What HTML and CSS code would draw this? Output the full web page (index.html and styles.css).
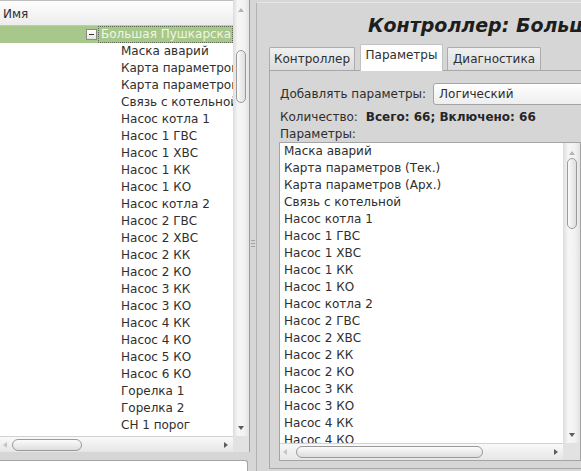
FILE: index.html
```html
<!DOCTYPE html>
<html>
<head>
<meta charset="utf-8">
<link rel="stylesheet" href="styles.css">
</head>
<body>
<div class="app">
  <div class="left">
    <div class="tree">
      <div class="tree-view">
        <div class="tree-header">Имя</div>
        <div class="tree-row selected"><span class="expander"></span><span class="focus">Большая Пушкарская</span></div>
        <div class="tree-row child">Маска аварий</div>
        <div class="tree-row child">Карта параметров (Тек.)</div>
        <div class="tree-row child">Карта параметров (Арх.)</div>
        <div class="tree-row child">Связь с котельной</div>
        <div class="tree-row child">Насос котла 1</div>
        <div class="tree-row child">Насос 1 ГВС</div>
        <div class="tree-row child">Насос 1 ХВС</div>
        <div class="tree-row child">Насос 1 КК</div>
        <div class="tree-row child">Насос 1 КО</div>
        <div class="tree-row child">Насос котла 2</div>
        <div class="tree-row child">Насос 2 ГВС</div>
        <div class="tree-row child">Насос 2 ХВС</div>
        <div class="tree-row child">Насос 2 КК</div>
        <div class="tree-row child">Насос 2 КО</div>
        <div class="tree-row child">Насос 3 КК</div>
        <div class="tree-row child">Насос 3 КО</div>
        <div class="tree-row child">Насос 4 КК</div>
        <div class="tree-row child">Насос 4 КО</div>
        <div class="tree-row child">Насос 5 КО</div>
        <div class="tree-row child">Насос 6 КО</div>
        <div class="tree-row child">Горелка 1</div>
        <div class="tree-row child">Горелка 2</div>
        <div class="tree-row child">СН 1 порог</div>
        <div class="tree-row child">СН 2 порог</div>
      </div>
      <div class="vscroll">
        <span class="arr-up"></span>
        <span class="vthumb tree-vthumb"></span>
        <span class="arr-down"></span>
      </div>
      <div class="hscroll">
        <span class="arr-left"></span>
        <span class="hthumb tree-hthumb"></span>
        <span class="arr-right"></span>
      </div>
      <div class="corner"></div>
    </div>
    <div class="bottom-box"></div>
  </div>

  <div class="splitter"><span class="grip"></span></div>

  <div class="right">
    <div class="title">Контроллер: Большая Пушкарская</div>
    <div class="tabs">
      <div class="tab tab-1">Контроллер</div>
      <div class="tab tab-2 active">Параметры</div>
      <div class="tab tab-3">Диагностика</div>
    </div>
    <div class="panel">
      <div class="add-row">
        <span class="label">Добавлять параметры:</span>
        <div class="combo">Логический</div>
      </div>
      <div class="count-row">Количество:<b class="count">Всего: 66; Включено: 66</b></div>
      <div class="params-label">Параметры:</div>
      <div class="list">
        <div class="list-view">
          <div class="item">Маска аварий</div>
          <div class="item">Карта параметров (Тек.)</div>
          <div class="item">Карта параметров (Арх.)</div>
          <div class="item">Связь с котельной</div>
          <div class="item">Насос котла 1</div>
          <div class="item">Насос 1 ГВС</div>
          <div class="item">Насос 1 ХВС</div>
          <div class="item">Насос 1 КК</div>
          <div class="item">Насос 1 КО</div>
          <div class="item">Насос котла 2</div>
          <div class="item">Насос 2 ГВС</div>
          <div class="item">Насос 2 ХВС</div>
          <div class="item">Насос 2 КК</div>
          <div class="item">Насос 2 КО</div>
          <div class="item">Насос 3 КК</div>
          <div class="item">Насос 3 КО</div>
          <div class="item">Насос 4 КК</div>
          <div class="item">Насос 4 КО</div>
          <div class="item">Насос 5 КО</div>
          <div class="item">Насос 6 КО</div>
        </div>
        <div class="vscroll">
          <span class="arr-up"></span>
          <span class="vthumb list-vthumb"></span>
          <span class="arr-down"></span>
        </div>
        <div class="hscroll">
          <span class="arr-left"></span>
          <span class="hthumb list-hthumb"></span>
          <span class="arr-right"></span>
        </div>
        <div class="corner"></div>
      </div>
    </div>
  </div>
</div>
</body>
</html>
```

FILE: styles.css
```css
html, body {
  margin: 0;
  padding: 0;
}
body {
  width: 581px;
  height: 471px;
  overflow: hidden;
  background: #d6d6d6;
  font-family: "DejaVu Sans", sans-serif;
  font-size: 12px;
  color: #2e2e2e;
}
.app {
  display: flex;
  height: 471px;
}

/* ---------- left pane ---------- */
.left {
  width: 250px;
  flex: none;
  display: flex;
  flex-direction: column;
}
.tree {
  display: grid;
  grid-template-columns: 233px 16px;
  grid-template-rows: 436px 16px;
  border-right: 1px solid #9c9c9c;
  background: #fff;
}
.tree-view {
  overflow: hidden;
  min-height: 0;
  background: #fff;
}
.tree-header {
  height: 24px;
  box-sizing: content-box;
  border-top: 1px solid #bdbdbd;
  border-bottom: 1px solid #c4c4c4;
  background: linear-gradient(#fefefe, #ececec);
  padding-left: 3px;
  line-height: 26px;
}
.tree-row {
  height: 17px;
  line-height: 17px;
  white-space: nowrap;
  overflow: hidden;
}
.child {
  padding-left: 121px;
}
.selected {
  display: flex;
  align-items: center;
  padding-left: 86px;
  background: #a7c78b;
  color: #eef6e2;
}
.expander {
  flex: none;
  width: 9px;
  height: 9px;
  border: 1px solid #8a8a8a;
  background: linear-gradient(#ffffff, #e4e4e4);
  margin-right: 1px;
  display: flex;
  align-items: center;
  justify-content: center;
}
.expander::before {
  content: "";
  width: 5px;
  height: 1px;
  background: #333;
}
.focus {
  flex: 1;
  height: 17px;
  box-sizing: border-box;
  border: 1px dotted #5a6a50;
  padding-left: 2px;
  line-height: 15px;
  overflow: hidden;
}

/* ---------- scrollbars ---------- */
.vscroll {
  display: flex;
  flex-direction: column;
  align-items: center;
  min-height: 0;
  background: linear-gradient(to right, #dcdcdc, #f6f6f6 30%, #f2f2f2 70%, #e2e2e2);
}
.hscroll {
  display: flex;
  align-items: center;
  background: linear-gradient(#f9f9f9, #e6e6e6);
  border-top: 1px solid #d2d2d2;
}
.corner {
  background: #e2e2e2;
}
.arr-up {
  margin-top: 8px;
  width: 0;
  height: 0;
  border-left: 3px solid transparent;
  border-right: 3px solid transparent;
  border-bottom: 4px solid #b4b4b4;
}
.arr-down {
  margin-top: auto;
  margin-bottom: 6px;
  width: 0;
  height: 0;
  border-left: 3px solid transparent;
  border-right: 3px solid transparent;
  border-top: 4px solid #5c5c5c;
}
.arr-left {
  margin-left: 3px;
  width: 0;
  height: 0;
  border-top: 3px solid transparent;
  border-bottom: 3px solid transparent;
  border-right: 4px solid #c4c4c4;
}
.arr-right {
  margin-left: auto;
  margin-right: 5px;
  width: 0;
  height: 0;
  border-top: 3px solid transparent;
  border-bottom: 3px solid transparent;
  border-left: 4px solid #5c5c5c;
}
.vthumb {
  width: 10px;
  box-sizing: border-box;
  border: 1px solid #9a9a9a;
  border-radius: 6px;
  background: linear-gradient(to right, #fbfbfb, #dedede);
}
.hthumb {
  height: 12px;
  box-sizing: border-box;
  border: 1px solid #9a9a9a;
  border-radius: 6px;
  background: linear-gradient(#fbfbfb, #dedede);
}
.tree-vthumb {
  margin-top: 38px;
  height: 53px;
}
.tree-hthumb {
  margin-left: 5px;
  width: 70px;
}
.list-vthumb {
  margin-top: 3px;
  height: 71px;
}
.list-hthumb {
  margin-left: 9px;
  width: 187px;
}

.bottom-box {
  margin-top: 8px;
  flex: 1;
  width: 249px;
  margin-left: -1px;
  box-sizing: border-box;
  background: #fff;
  border: 1px solid #a4a4a4;
  border-bottom: none;
  border-radius: 0 3px 0 0;
}

/* ---------- splitter ---------- */
.splitter {
  width: 6px;
  flex: none;
  display: flex;
  justify-content: center;
  padding-top: 240px;
  box-sizing: border-box;
}
.grip {
  width: 4px;
  height: 1px;
  background: #a2a2a2;
  box-shadow: 0 3px 0 #a2a2a2, 0 6px 0 #a2a2a2;
}

/* ---------- right pane ---------- */
.right {
  flex: 1;
  min-width: 0;
  min-height: 0;
  margin-top: 2px;
  border-top: 1px solid #e6e6e6;
  border-left: 1px solid #b2b2b2;
  padding: 0 0 2px 12px;
  overflow: hidden;
  display: flex;
  flex-direction: column;
}
.title {
  margin-top: 11px;
  padding-left: 99px;
  font-size: 19px;
  font-weight: bold;
  font-style: italic;
  line-height: 22px;
  color: #1e1e1e;
  white-space: nowrap;
}
.tabs {
  display: flex;
  align-items: flex-end;
  margin-top: 8px;
  height: 27px;
  flex: none;
  position: relative;
  z-index: 1;
  margin-bottom: -1px;
}
.tab {
  height: 23px;
  margin-bottom: 1px;
  box-sizing: border-box;
  border: 1px solid #acacac;
  border-bottom: none;
  border-radius: 2px 2px 0 0;
  background: linear-gradient(#f0f0f0, #dcdcdc);
  text-align: center;
  line-height: 22px;
  white-space: nowrap;
}
.tab-1 { width: 86px; }
.tab-2 { width: 83px; margin-left: 5px; }
.tab-3 { width: 94px; margin-left: 4px; }
.tab.active {
  height: 27px;
  margin-bottom: 0;
  background: #fff;
  border-color: #c2c2c2;
  line-height: 21px;
}
.panel {
  flex: 1;
  min-height: 0;
  width: 340px;
  box-sizing: border-box;
  border: 1px solid #a8a8a8;
  padding: 12px 0 7px 10px;
  display: flex;
  flex-direction: column;
}
.add-row {
  display: flex;
  align-items: center;
  height: 22px;
  flex: none;
  white-space: nowrap;
}
.combo {
  margin-left: 7px;
  width: 170px;
  height: 22px;
  box-sizing: border-box;
  border: 1px solid #a4a4a4;
  border-radius: 3px;
  background: linear-gradient(#ffffff, #eeeeee);
  padding-left: 5px;
  line-height: 20px;
}
.count-row {
  margin-top: 4px;
  line-height: 17px;
  white-space: nowrap;
  flex: none;
}
.count {
  margin-left: 8px;
  font-weight: bold;
  color: #262626;
}
.params-label {
  line-height: 16px;
  flex: none;
}
.list {
  flex: 1;
  min-height: 0;
  width: 302px;
  margin-left: -1px;
  box-sizing: border-box;
  border: 1px solid #a4a4a4;
  background: #fff;
  display: grid;
  grid-template-columns: minmax(0, 1fr) 17px;
  grid-template-rows: minmax(0, 1fr) 17px;
}
.list-view {
  overflow: hidden;
  min-height: 0;
  padding-left: 4px;
}
.item {
  height: 17px;
  line-height: 17px;
  white-space: nowrap;
}
```
